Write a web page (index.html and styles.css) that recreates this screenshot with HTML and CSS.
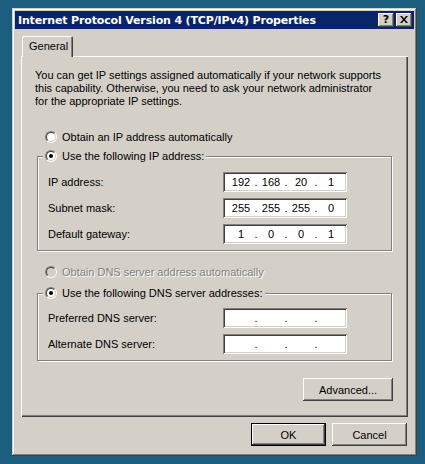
FILE: index.html
```html
<!DOCTYPE html>
<html>
<head>
<meta charset="utf-8">
<link rel="stylesheet" href="styles.css">
</head>
<body>
<div class="window">
  <div class="titlebar">
    <span class="title">Internet Protocol Version 4 (TCP/IPv4) Properties</span>
    <div class="caption-buttons">
      <span class="cbtn help">?</span>
      <span class="cbtn close"><svg width="8" height="7" viewBox="0 0 8 7"><path d="M0 0h2l2 2.5L6 0h2L5 3.5 8 7H6L4 4.5 2 7H0l3-3.5z" fill="#000"/></svg></span>
    </div>
  </div>
  <div class="content">
    <div class="tabs"><div class="tab">General</div></div>
    <div class="panel">
      <p class="intro">You can get IP settings assigned automatically if your network supports<br>this capability. Otherwise, you need to ask your network administrator<br>for the appropriate IP settings.</p>
      <div class="option opt-ip-auto"><span class="radio"><span class="radio-in"></span></span><span class="opt-text">Obtain an IP address automatically</span></div>
      <div class="group g1">
        <div class="legend"><span class="radio checked"><span class="radio-in"></span></span><span class="opt-text">Use the following IP address:</span></div>
        <div class="row first-row"><span class="label">IP address:</span>
          <div class="ip"><span class="f">192</span><span class="d">.</span><span class="f">168</span><span class="d">.</span><span class="f">20</span><span class="d">.</span><span class="f">1</span></div></div>
        <div class="row"><span class="label">Subnet mask:</span>
          <div class="ip"><span class="f">255</span><span class="d">.</span><span class="f">255</span><span class="d">.</span><span class="f">255</span><span class="d">.</span><span class="f">0</span></div></div>
        <div class="row"><span class="label">Default gateway:</span>
          <div class="ip"><span class="f">1</span><span class="d">.</span><span class="f">0</span><span class="d">.</span><span class="f">0</span><span class="d">.</span><span class="f">1</span></div></div>
      </div>
      <div class="option disabled opt-dns-auto"><span class="radio"><span class="radio-in"></span></span><span class="opt-text">Obtain DNS server address automatically</span></div>
      <div class="group g2">
        <div class="legend"><span class="radio checked"><span class="radio-in"></span></span><span class="opt-text">Use the following DNS server addresses:</span></div>
        <div class="row first-row2"><span class="label">Preferred DNS server:</span>
          <div class="ip"><span class="f"></span><span class="d">.</span><span class="f"></span><span class="d">.</span><span class="f"></span><span class="d">.</span><span class="f"></span></div></div>
        <div class="row"><span class="label">Alternate DNS server:</span>
          <div class="ip"><span class="f"></span><span class="d">.</span><span class="f"></span><span class="d">.</span><span class="f"></span><span class="d">.</span><span class="f"></span></div></div>
      </div>
      <div class="adv-row"><button class="btn adv">Advanced...</button></div>
    </div>
    <div class="dialog-buttons">
      <button class="btn default"><span class="btn-inner">OK</span></button>
      <button class="btn cancel">Cancel</button>
    </div>
  </div>
</div>
</body>
</html>
```
FILE: styles.css
```css
html, body {
  margin: 0;
  padding: 0;
}
body {
  background: #1c5e80;
  padding: 8px 0 0 12px;
  height: 464px;
  box-sizing: border-box;
  font-family: "Liberation Sans", Arial, sans-serif;
  font-size: 11px;
  color: #000;
}
.window {
  width: 405px;
  height: 448px;
  box-sizing: border-box;
  padding: 3px;
  background: #d4d0c8;
  box-shadow: inset -1px -1px #404040, inset 1px 1px #d4d0c8, inset -2px -2px #808080, inset 2px 2px #fff;
  display: flex;
  flex-direction: column;
}
.titlebar {
  height: 18px;
  background: #0a246a;
  display: flex;
  align-items: center;
  justify-content: space-between;
  padding: 0 2px 0 3px;
}
.title {
  color: #fff;
  font-weight: bold;
  font-size: 11px;
  font-family: "DejaVu Sans", sans-serif;
  letter-spacing: -0.15px;
}
.caption-buttons {
  display: flex;
  gap: 2px;
}
.cbtn {
  width: 16px;
  height: 14px;
  box-sizing: border-box;
  background: #d4d0c8;
  box-shadow: inset -1px -1px #404040, inset 1px 1px #fff, inset -2px -2px #808080, inset 2px 2px #d4d0c8;
  display: flex;
  align-items: center;
  justify-content: center;
  font-weight: bold;
  font-size: 11px;
  font-family: "DejaVu Sans", sans-serif;
  line-height: 1;
  padding-bottom: 1px;
}
.content {
  padding: 7px 6px 0 6px;
}
.tabs {
  display: flex;
  padding-left: 1px;
}
.tab {
  position: relative;
  width: 51px;
  height: 21px;
  margin-bottom: -1px;
  box-sizing: border-box;
  padding: 4px 0 0 7px;
  background: #d4d0c8;
  box-shadow: inset 1px 1px #fff, inset -1px 0 #404040, inset -2px 0 #808080;
  border-top-left-radius: 2px;
  border-top-right-radius: 2px;
}
.panel {
  height: 361px;
  box-sizing: border-box;
  padding: 13px 15px 0 14px;
  box-shadow: inset 1px 1px #fff, inset -1px -1px #404040, inset -2px -2px #808080;
  display: flex;
  flex-direction: column;
}
.intro {
  margin: 0;
  line-height: 13px;
}
.option, .legend {
  display: flex;
  align-items: center;
  height: 14px;
}
.opt-text {
  margin-left: 5px;
}
.opt-ip-auto {
  margin: 22px 0 0 10px;
}
.opt-dns-auto {
  margin: 14px 0 0 10px;
}
.disabled .opt-text {
  color: #808080;
  text-shadow: 1px 1px #fff;
}
.radio {
  width: 12px;
  height: 12px;
  box-sizing: border-box;
  border-radius: 50%;
  border: 1px solid;
  border-color: #808080 #fff #fff #808080;
  display: flex;
  align-items: center;
  justify-content: center;
  flex: none;
}
.radio-in {
  width: 10px;
  height: 10px;
  box-sizing: border-box;
  border-radius: 50%;
  border: 1px solid;
  border-color: #404040 #d4d0c8 #d4d0c8 #404040;
  background: #fff;
  display: flex;
  align-items: center;
  justify-content: center;
}
.disabled .radio-in {
  background: #d4d0c8;
}
.checked .radio-in::after {
  content: "";
  width: 4px;
  height: 4px;
  border-radius: 50%;
  background: #000;
}
.group {
  width: 355px;
  box-sizing: border-box;
  margin-left: 2px;
  border: 1px solid #808080;
  box-shadow: inset 1px 1px #fff, 1px 1px #fff;
  padding: 0 0 6px 10px;
}
.g1 {
  margin-top: 12px;
}
.g2 {
  margin-top: 14px;
}
.legend {
  width: fit-content;
  margin: -8px 0 0 -5px;
  padding: 0 2px;
  background: #d4d0c8;
}
.row {
  display: flex;
  align-items: center;
  height: 20px;
  margin-top: 6px;
}
.first-row {
  margin-top: 9px;
}
.first-row2 {
  margin-top: 8px;
}
.label {
  width: 175px;
}
.ip {
  width: 124px;
  height: 20px;
  box-sizing: border-box;
  background: #fff;
  box-shadow: inset 1px 1px #808080, inset -1px -1px #fff, inset 2px 2px #404040, inset -2px -2px #d4d0c8;
  display: flex;
  align-items: center;
  padding: 0 0 0 4px;
}
.ip .f {
  width: 28px;
  text-align: center;
}
.ip .d {
  width: 2px;
  text-align: center;
  display: flex;
  justify-content: center;
}
.adv-row {
  display: flex;
  justify-content: flex-end;
  margin-top: 17px;
}
.btn {
  font-family: "Liberation Sans", Arial, sans-serif;
  font-size: 11px;
  color: #000;
  background: #d4d0c8;
  border: 0;
  padding: 0;
  box-sizing: border-box;
  height: 23px;
  box-shadow: inset -1px -1px #404040, inset 1px 1px #fff, inset -2px -2px #808080, inset 2px 2px #d4d0c8;
}
.adv {
  width: 90px;
}
.dialog-buttons {
  display: flex;
  justify-content: flex-end;
  gap: 6px;
  margin-top: 6px;
  padding-right: 1px;
}
.default, .cancel {
  width: 75px;
}
.default {
  border: 1px solid #000;
}
```
